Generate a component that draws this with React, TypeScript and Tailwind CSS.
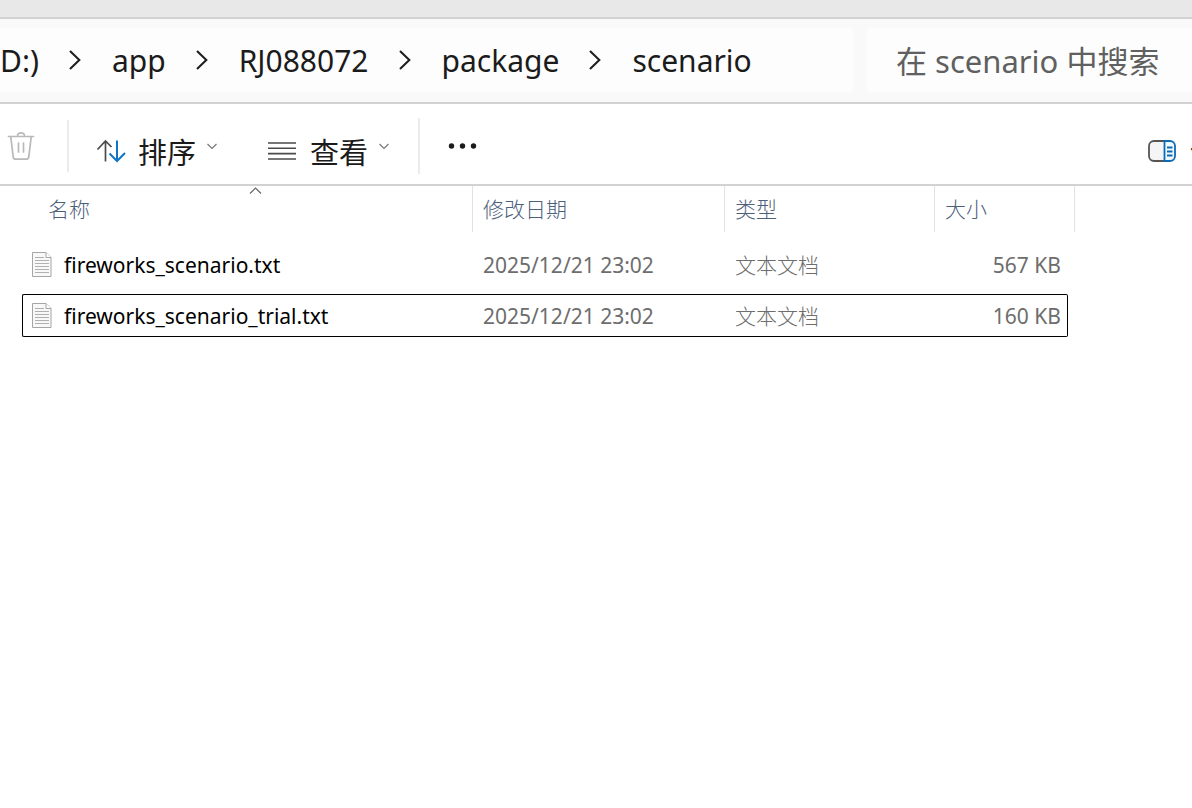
import React from 'react';
import clsx from 'clsx';

const crumbs = ['(D:)', 'app', 'RJ088072', 'package', 'scenario'];

const files = [
  { name: 'fireworks_scenario.txt', modified: '2025/12/21 23:02', type: '文本文档', size: '567 KB', focused: false },
  { name: 'fireworks_scenario_trial.txt', modified: '2025/12/21 23:02', type: '文本文档', size: '160 KB', focused: true },
];

function CrumbChevron() {
  return (
    <svg className="ml-[30px] mr-[31px] shrink-0" width="12" height="20" viewBox="0 0 12 20" fill="none" stroke="#1f1f1f" strokeWidth="2.1" aria-hidden="true">
      <path d="M1 1l9.3 9L1 19" />
    </svg>
  );
}

function DropChevron() {
  return (
    <svg className="mb-2.5 shrink-0" width="12" height="8" viewBox="0 0 12 8" fill="none" stroke="#777" strokeWidth="1.2" aria-hidden="true">
      <path d="M1.500 2L6 6.500 10.500 2" />
    </svg>
  );
}

function TrashIcon() {
  return (
    <svg width="28" height="30" viewBox="0 0 28 30" fill="none" stroke="#b9b9b9" strokeWidth="1.7" strokeLinecap="round" strokeLinejoin="round" aria-hidden="true">
      <path d="M1.500 5.500h25M10.500 5c0-2 1.500-3.200 3.500-3.200s3.500 1.200 3.500 3.200M3.800 5.800l2.400 20c.2 1.500 1.200 2.400 2.600 2.400h10.400c1.400 0 2.400-.9 2.600-2.400l2.400-20M11.500 12v9M16.500 12v9" />
    </svg>
  );
}

function SortIcon() {
  return (
    <svg width="30" height="24" viewBox="0 0 30 24" fill="none" strokeWidth="1.700" aria-hidden="true">
      <path stroke="#4a4a4a" d="M9.500 22.500V2M1.500 10.500L9.500 2l6 6" />
      <path stroke="#0f74c4" strokeWidth="2" d="M21 1.500V22M13.500 14.500L21 22l8-8" />
    </svg>
  );
}

function ListIcon() {
  return (
    <svg width="28" height="20" viewBox="0 0 28 20" stroke="#4a4a4a" strokeWidth="1.600" aria-hidden="true">
      <path d="M0 2h28M0 7.300h28M0 12.600h28M0 18h28" />
    </svg>
  );
}

function DetailsIcon() {
  return (
    <svg className="shrink-0" width="28" height="22" viewBox="0 0 28 22" fill="none" strokeWidth="1.800" aria-hidden="true">
      <path fill="#f5f5f5" stroke="#555" d="M16.500 1H6a5 5 0 0 0-5 5v10a5 5 0 0 0 5 5h10.500" />
      <path fill="#f2f9fd" stroke="#0b6cb5" d="M16.500 1H22a5 5 0 0 1 5 5v10a5 5 0 0 1-5 5h-5.500z" />
      <path stroke="#0b6cb5" d="M19 7.500h5.500M19 11.500h5.500M19 15.500h5.500" />
    </svg>
  );
}

function TextFileIcon() {
  return (
    <svg className="shrink-0" width="20" height="26" viewBox="0 0 20 26" fill="none" aria-hidden="true">
      <path d="M.5.500h13.500l5 5v19H.5z" fill="#f8f8f8" stroke="#a5a5a5" />
      <path d="M14 .5v5h5" fill="#fff" stroke="#a5a5a5" />
      <path d="M3 5.500h9M3 8.500h14M3 11.500h14M3 14.500h14M3 17.500h14M3 20.500h14" stroke="#b0b0b0" />
    </svg>
  );
}

function ColumnHeader({ label, children }: { label: string; children?: React.ReactNode }) {
  return (
    <th scope="col" className="p-0 pb-[11px] text-left font-light">
      <div className="relative flex h-[46px] items-center border-r border-[#e2e2e2] pl-2.5">
        <span>{label}</span>
        {children}
      </div>
    </th>
  );
}

export default function App() {
  return (
    <div className="min-h-screen overflow-hidden bg-white font-['Noto_Sans','Noto_Sans_CJK_SC',sans-serif] text-[#1b1b1b]">
      <div className="h-[19px] border-b-2 border-[#d2d2d2] bg-[#e8e8e8]" />

      <header className="flex h-[85px] gap-3.5 border-b-2 border-[#d2d2d2] bg-[#f9f9f9] pt-[9px] pb-2.5">
        <nav aria-label="Path" className="flex flex-1 items-center overflow-hidden rounded-r bg-[#fdfdfd] text-[30px] leading-10">
          {crumbs.map((crumb, i) => (
            <React.Fragment key={crumb}>
              {i > 0 && <CrumbChevron />}
              <a href="#" className={clsx('pt-0.5 whitespace-nowrap', i === 0 && '-ml-[9px]')}>{crumb}</a>
            </React.Fragment>
          ))}
        </nav>
        <input
          type="search"
          aria-label="搜索"
          placeholder="在 scenario 中搜索"
          className="w-[325px] rounded-l bg-[#fdfdfd] pt-0.5 pl-[29px] text-[31px] leading-10 placeholder:text-[#606060] focus:outline-none"
        />
      </header>

      <div className="flex h-[82px] items-center border-b-2 border-[#d2d2d2] pt-1 text-[29px] leading-10 whitespace-nowrap">
        <button type="button" aria-label="删除" disabled className="ml-[7px]">
          <TrashIcon />
        </button>
        <div className="ml-8 h-[52px] w-0.5 bg-[#ebebeb]" />
        <button type="button" className="ml-[27px] flex items-center pt-2.5">
          <SortIcon />
          <span className="mr-2.5 ml-3 pt-1">排序</span>
          <DropChevron />
        </button>
        <button type="button" className="ml-[50px] flex items-center pt-2.5">
          <ListIcon />
          <span className="mr-2.5 ml-3.5 pt-1">查看</span>
          <DropChevron />
        </button>
        <div className="ml-7 h-14 w-0.5 bg-[#ebebeb]" />
        <button type="button" aria-label="更多" className="ml-7">
          <svg width="30" height="6" viewBox="0 0 30 6" fill="#1b1b1b" aria-hidden="true">
            <circle cx="3.500" cy="3" r="2.700" />
            <circle cx="14.500" cy="3" r="2.700" />
            <circle cx="25.500" cy="3" r="2.700" />
          </svg>
        </button>
        <button type="button" className="ml-auto flex w-11 items-center gap-3.5 overflow-hidden pt-2.5">
          <DetailsIcon />
          <span className="pt-1">详细信息</span>
        </button>
      </div>

      <table className="ml-[22px] w-[1053px] table-fixed border-separate border-spacing-0 text-[21px] leading-7 whitespace-nowrap">
        <colgroup>
          <col className="w-[451px]" />
          <col className="w-[252px]" />
          <col className="w-[210px]" />
          <col className="w-[140px]" />
        </colgroup>
        <thead className="text-[#4c607a]">
          <tr>
            <th scope="col" className="p-0 pb-[11px] text-left font-light" aria-sort="ascending">
              <div className="relative flex h-[46px] items-center border-r border-[#e2e2e2] pl-[26px]">
                <span>名称</span>
                <svg className="absolute top-px left-[227px]" width="13" height="8" viewBox="0 0 13 8" fill="none" stroke="#666" strokeWidth="1.200" aria-hidden="true">
                  <path d="M1 6.500L6.500 1 12 6.500" />
                </svg>
              </div>
            </th>
            <ColumnHeader label="修改日期" />
            <ColumnHeader label="类型" />
            <ColumnHeader label="大小" />
          </tr>
        </thead>
        <tbody className="text-[#6d6d6d]">
          {files.map((file) => {
            const line = file.focused ? 'border-black' : 'border-transparent';
            return (
              <tr key={file.name}>
                <td className="p-0 pb-2">
                  <div className={clsx('flex h-[43px] items-center gap-3 rounded-l-xs border-y border-l pl-[9px] text-black', line)}>
                    <TextFileIcon />
                    <span>{file.name}</span>
                  </div>
                </td>
                <td className="p-0 pb-2">
                  <div className={clsx('flex h-[43px] items-center border-y pl-2.5', line)}>{file.modified}</div>
                </td>
                <td className="p-0 pb-2">
                  <div className={clsx('flex h-[43px] items-center border-y pl-2.5 font-light', line)}>{file.type}</div>
                </td>
                <td className="p-0 pr-[7px] pb-2">
                  <div className={clsx('flex h-[43px] items-center justify-end rounded-r-xs border-y border-r pr-1.5', line)}>{file.size}</div>
                </td>
              </tr>
            );
          })}
        </tbody>
      </table>
    </div>
  );
}
